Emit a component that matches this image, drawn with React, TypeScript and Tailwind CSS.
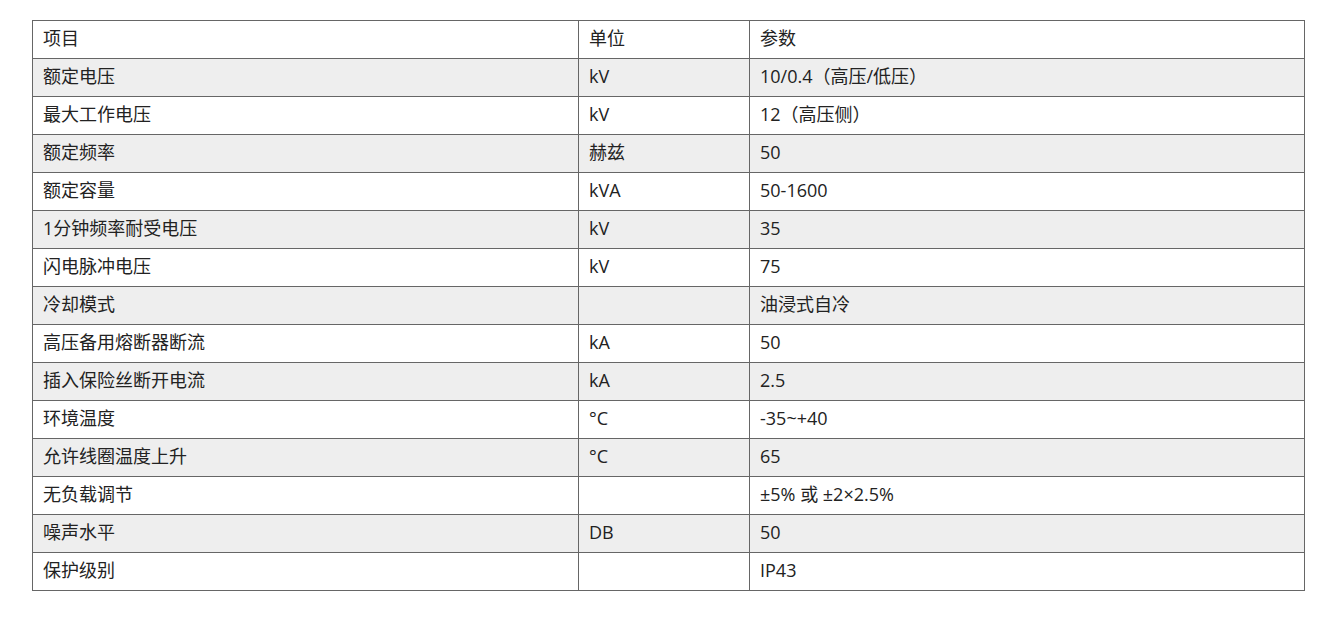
const rows: [string, string, string][] = [
  ["额定电压", "kV", "10/0.4（高压/低压）"],
  ["最大工作电压", "kV", "12（高压侧）"],
  ["额定频率", "赫兹", "50"],
  ["额定容量", "kVA", "50-1600"],
  ["1分钟频率耐受电压", "kV", "35"],
  ["闪电脉冲电压", "kV", "75"],
  ["冷却模式", "", "油浸式自冷"],
  ["高压备用熔断器断流", "kA", "50"],
  ["插入保险丝断开电流", "kA", "2.5"],
  ["环境温度", "°C", "-35~+40"],
  ["允许线圈温度上升", "°C", "65"],
  ["无负载调节", "", "±5% 或 ±2×2.5%"],
  ["噪声水平", "DB", "50"],
  ["保护级别", "", "IP43"],
];

const cell = "border border-[#666] px-[10px] pt-0 pb-[4px] h-[38px] align-middle text-left font-normal leading-[20px]";

export default function App() {
  return (
    <div
      className="min-h-screen bg-white pl-[32px] pt-[20px] text-[18px] text-[#222]"
      style={{ fontFamily: '"Open Sans", "Noto Sans CJK SC", sans-serif' }}
    >
      <table className="w-[1273px] table-fixed border-collapse">
        <colgroup>
          <col className="w-[546px]" />
          <col className="w-[171px]" />
          <col />
        </colgroup>
        <thead>
          <tr className="bg-white">
            <th className={cell}>项目</th>
            <th className={cell}>单位</th>
            <th className={cell}>参数</th>
          </tr>
        </thead>
        <tbody>
          {rows.map((r, i) => (
            <tr key={i} className={i % 2 === 0 ? "bg-[#eee]" : "bg-white"}>
              <td className={cell}>{r[0]}</td>
              <td className={cell}>{r[1]}</td>
              <td className={cell}>{r[2]}</td>
            </tr>
          ))}
        </tbody>
      </table>
    </div>
  );
}
